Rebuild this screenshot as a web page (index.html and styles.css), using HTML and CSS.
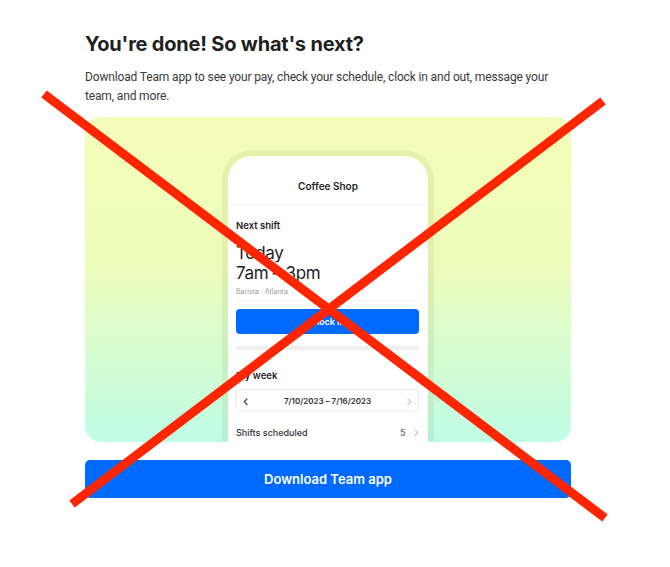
FILE: index.html
```html
<!DOCTYPE html>
<html lang="en">
<head>
    <meta charset="UTF-8">
    <meta name="viewport" content="width=device-width, initial-scale=1.0">
    <title>You're done</title>
    <link rel="stylesheet" href="styles.css">
</head>
<body>
    <div class="page">
        <h1>You're done! So what's next?</h1>
        <p class="intro">Download Team app to see your pay, check your schedule, clock in and out, message your team, and more.</p>

        <div class="promo">
            <div class="phone">
                <div class="screen">
                    <div class="screen-title">Coffee Shop</div>
                    <div class="screen-body">
                        <div class="label">Next shift</div>
                        <div class="shift-big">Today<br>7am – 3pm</div>
                        <div class="shift-meta">Barista · Atlanta</div>
                        <div class="clock-btn">Clock in</div>
                        <div class="gray-bar"></div>
                        <div class="label week">My week</div>
                        <div class="date-picker">
                            <span class="chev">&lsaquo;</span>
                            <span>7/10/2023 – 7/16/2023</span>
                            <span class="chev light">&rsaquo;</span>
                        </div>
                        <div class="row">
                            <span>Shifts scheduled</span>
                            <span class="row-val">5 <span class="chev light">&rsaquo;</span></span>
                        </div>
                    </div>
                </div>
            </div>
        </div>

        <button class="download">Download Team app</button>
    </div>

    <!-- the red cross drawn over the whole screenshot -->
    <svg class="cross" width="670" height="567" viewBox="0 0 670 567">
        <line x1="44" y1="94" x2="605" y2="518" stroke="#fe2500" stroke-width="9"/>
        <line x1="603" y1="101" x2="72" y2="504" stroke="#fe2500" stroke-width="9"/>
    </svg>
</body>
</html>
```

FILE: styles.css
```css
body {
    margin: 0;
    background-color: #fff;
    font-family: Inter, "Noto Sans", sans-serif;
    color: #1f1f1f;
}
.page {
    width: 486px;
    padding: 30px 0 0 85px;
}
h1 {
    margin: 0;
    font-size: 20px;
    font-weight: 700;
    letter-spacing: -0.2px;
    line-height: 28px;
}
.intro {
    margin: 10px 0 11px;
    font-family: Roboto, "Noto Sans", sans-serif;
    font-size: 12px;
    line-height: 19px;
    letter-spacing: -0.15px;
    color: #3a3a3a;
}
.promo {
    height: 325px;
    border-radius: 16px;
    background: linear-gradient(180deg, #f4fdb8 0%, #eefcbb 45%, #bffde6 100%);
    overflow: hidden;
    display: flex;
    justify-content: center;
    padding-top: 33px;
    box-sizing: border-box;
}
.phone {
    width: 200px;
    border: 6px solid rgba(90, 110, 0, 0.08);
    border-bottom: none;
    border-radius: 30px 30px 0 0;
}
.screen {
    background: #fff;
    border-radius: 24px 24px 0 0;
    height: 100%;
}
.screen-title {
    text-align: center;
    font-size: 10px;
    font-weight: 600;
    padding: 24px 0 12px;
    border-bottom: 1px solid #f3f3f3;
}
.screen-body {
    padding: 0 9px 0 8px;
}
.label {
    font-size: 9.5px;
    font-weight: 600;
    margin-top: 15px;
}
.shift-big {
    font-size: 17px;
    line-height: 20px;
    margin-top: 12px;
    letter-spacing: -0.3px;
}
.shift-meta {
    font-size: 7px;
    color: #9a9a9a;
    margin-top: 4px;
    padding-bottom: 4px;
    border-bottom: 1px solid #f3f3f3;
}
.clock-btn {
    margin-top: 8px;
    height: 25px;
    border-radius: 4px;
    background: #006aff;
    color: #fff;
    font-size: 9px;
    font-weight: 600;
    display: flex;
    align-items: center;
    justify-content: center;
}
.gray-bar {
    height: 4px;
    background: #f0f0f0;
    margin-top: 12px;
}
.label.week {
    margin-top: 20px;
}
.date-picker {
    margin-top: 8px;
    height: 21px;
    border: 1px solid #ececec;
    border-radius: 4px;
    display: flex;
    align-items: center;
    justify-content: space-between;
    padding: 0 6px;
    font-size: 8px;
    font-weight: 600;
    color: #333;
}
.chev {
    font-size: 14px;
    font-weight: 400;
    line-height: 1;
    color: #333;
}
.chev.light {
    color: #c8c8c8;
}
.row {
    display: flex;
    justify-content: space-between;
    align-items: center;
    margin-top: 13px;
    font-size: 9px;
    font-weight: 500;
    color: #333;
}
.row-val {
    display: flex;
    align-items: center;
    gap: 8px;
    color: #666;
}
.download {
    display: block;
    width: 100%;
    margin-top: 18px;
    height: 38px;
    border: none;
    border-radius: 5px;
    background: #006aff;
    color: #fff;
    font-family: Inter, "Noto Sans", sans-serif;
    font-size: 13px;
    font-weight: 600;
}
.cross {
    position: absolute;
    top: 0;
    left: 0;
    pointer-events: none;
}
```
